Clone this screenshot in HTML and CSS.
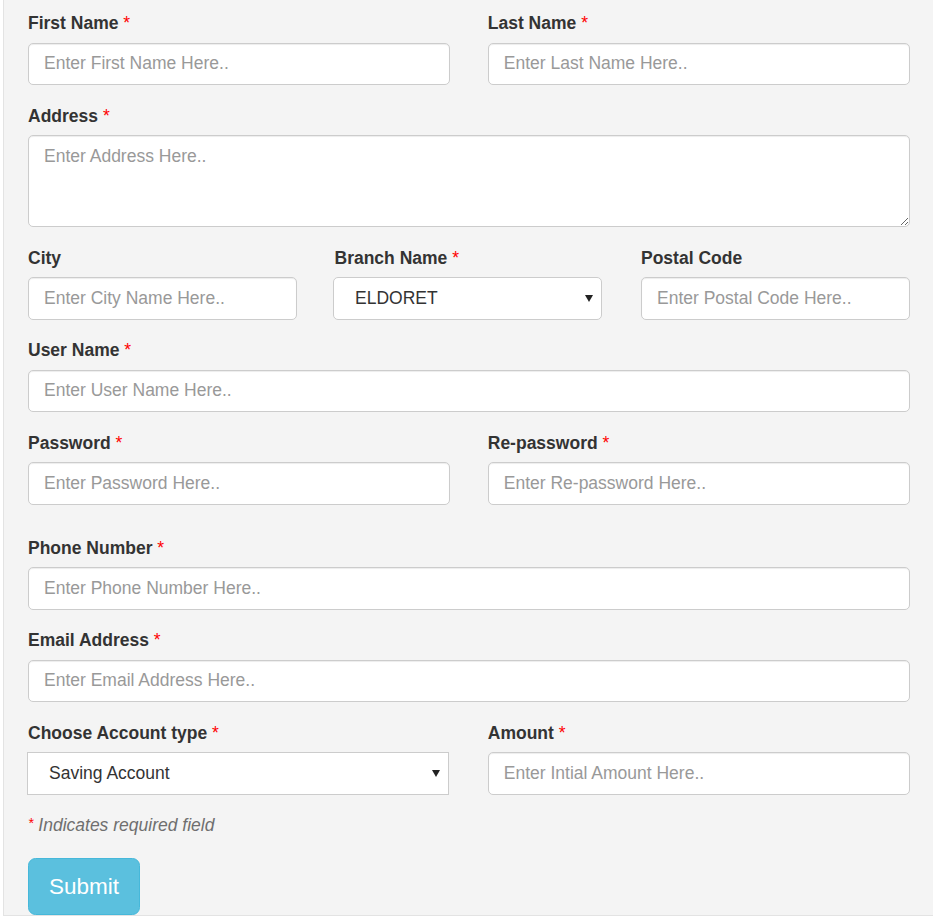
FILE: index.html
```html
<!DOCTYPE html>
<html lang="en">
<head>
<meta charset="utf-8">
<title>Register</title>
<link rel="stylesheet" href="styles.css">
</head>
<body>
<form class="well">
  <div class="row two">
    <div class="form-group">
      <label>First Name <span class="req">*</span></label>
      <input class="form-control" type="text" placeholder="Enter First Name Here..">
    </div>
    <div class="form-group">
      <label>Last Name <span class="req">*</span></label>
      <input class="form-control" type="text" placeholder="Enter Last Name Here..">
    </div>
  </div>
  <div class="form-group">
    <label>Address <span class="req">*</span></label>
    <textarea class="form-control textarea" rows="3" placeholder="Enter Address Here.."></textarea>
  </div>
  <div class="row three">
    <div class="form-group">
      <label>City</label>
      <input class="form-control" type="text" placeholder="Enter City Name Here..">
    </div>
    <div class="form-group">
      <label>Branch Name <span class="req">*</span></label>
      <div class="select-wrap branch">
        <select class="form-control select rounded">
          <option>ELDORET</option>
        </select>
      </div>
    </div>
    <div class="form-group">
      <label>Postal Code</label>
      <input class="form-control" type="text" placeholder="Enter Postal Code Here..">
    </div>
  </div>
  <div class="form-group">
    <label>User Name <span class="req">*</span></label>
    <input class="form-control" type="text" placeholder="Enter User Name Here..">
  </div>
  <div class="row two">
    <div class="form-group">
      <label>Password <span class="req">*</span></label>
      <input class="form-control" type="password" placeholder="Enter Password Here..">
    </div>
    <div class="form-group">
      <label>Re-password <span class="req">*</span></label>
      <input class="form-control" type="password" placeholder="Enter Re-password Here..">
    </div>
  </div>
  <div class="form-group spaced">
    <label>Phone Number <span class="req">*</span></label>
    <input class="form-control" type="text" placeholder="Enter Phone Number Here..">
  </div>
  <div class="form-group">
    <label>Email Address <span class="req">*</span></label>
    <input class="form-control" type="text" placeholder="Enter Email Address Here..">
  </div>
  <div class="row two">
    <div class="form-group">
      <label>Choose Account type <span class="req">*</span></label>
      <div class="select-wrap account">
        <select class="form-control select square">
          <option>Saving Account</option>
        </select>
      </div>
    </div>
    <div class="form-group">
      <label>Amount <span class="req">*</span></label>
      <input class="form-control" type="text" placeholder="Enter Intial Amount Here..">
    </div>
  </div>
  <p class="note"><span class="req">*</span> Indicates required field</p>
  <button type="button" class="btn-submit">Submit</button>
</form>
</body>
</html>
```

FILE: styles.css
```css
* {
  box-sizing: border-box;
}

html, body {
  margin: 0;
  padding: 0;
  overflow: hidden;
  background: #fff;
}

body {
  font-family: "Liberation Sans", Arial, Helvetica, sans-serif;
  font-size: 17.5px;
  line-height: 25px;
  color: #333;
}

.well {
  margin: 0 0 0 3px;
  width: calc(100% - 3px);
  background: #f4f4f4;
  border-left: 1px solid #e3e3e3;
  border-bottom: 1px solid #e3e3e3;
  padding: 11.25px 23px 0 24px;
}

.row {
  display: grid;
  column-gap: 37.5px;
}

.row.two {
  grid-template-columns: 1fr 1fr;
}

.row.three {
  grid-template-columns: 1fr 1fr 1fr;
}

.form-group {
  margin-bottom: 18.75px;
}

.form-group.spaced {
  margin-top: 12.5px;
}

label {
  display: block;
  font-weight: bold;
  margin-bottom: 6.25px;
  color: #333;
}

.req {
  color: #f00;
  font-weight: normal;
}

.form-control {
  display: block;
  width: 100%;
  height: 42.5px;
  padding: 7.5px 15px;
  font-family: "Liberation Sans", Arial, Helvetica, sans-serif;
  font-size: 17.5px;
  line-height: 25px;
  color: #555;
  background: #fff;
  border: 1px solid #ccc;
  border-radius: 5px;
  box-shadow: inset 0 1px 1px rgba(0, 0, 0, 0.075);
  margin: 0;
}

.form-control::placeholder {
  color: #999;
  opacity: 1;
}

.textarea {
  height: 92px;
  resize: vertical;
}

.select-wrap {
  position: relative;
}

.select-wrap.branch {
  margin: 0 1.5px 0 -1.5px;
}

.select-wrap.account {
  margin: 0 1px 0 -1px;
}

.select {
  -webkit-appearance: none;
  appearance: none;
  padding-left: 21px;
  color: #333;
  box-shadow: none;
}

.select.square {
  border-radius: 0;
}

.select-wrap::after {
  content: "";
  position: absolute;
  right: 9px;
  top: 18px;
  width: 0;
  height: 0;
  border-left: 4px solid transparent;
  border-right: 4px solid transparent;
  border-top: 7px solid #222;
  pointer-events: none;
}

.note {
  margin: 0;
  font-style: italic;
  color: #6f6f6f;
}

.note .req {
  font-size: 14px;
  vertical-align: top;
  line-height: 20px;
}

.btn-submit {
  display: block;
  margin-top: 20px;
  padding: 12.5px 20px;
  font-family: "Liberation Sans", Arial, Helvetica, sans-serif;
  font-size: 22.5px;
  line-height: 30px;
  color: #fff;
  background: #5bc0de;
  border: 1px solid #46b8da;
  border-radius: 7.5px;
  cursor: pointer;
}
```
